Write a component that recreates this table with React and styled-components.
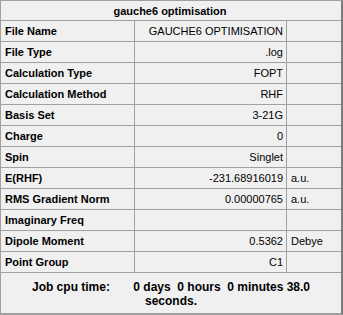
import React from "react";
import styled, { createGlobalStyle } from "styled-components";

const Global = createGlobalStyle`
  html, body { margin: 0; padding: 0; background: #f0f0f0; }
  body { font-family: "Liberation Sans", Arial, sans-serif; }
`;

const Panel = styled.div`
  box-sizing: border-box;
  width: 343px;
  height: 315px;
  background: #f0f0f0;
  border-top: 1px solid #a0a0a0;
  border-left: 1px solid #a0a0a0;
  border-right: 2px solid #7c7c7c;
  border-bottom: 2px solid #a0a0a0;
  display: flex;
  flex-direction: column;
  color: #000;
`;

const Grid = styled.div`
  display: grid;
  grid-template-columns: 134px 152px 1fr;
  grid-auto-rows: 21px;
  grid-template-rows: 20px;
`;

const Title = styled.div`
  grid-column: 1 / -1;
  border-bottom: 1px solid #a0a0a0;
  font-size: 11px;
  font-weight: bold;
  display: flex;
  align-items: center;
  justify-content: center;
  padding-right: 2px;
`;

const Cell = styled.div`
  box-sizing: border-box;
  border-bottom: 1px solid #a0a0a0;
  border-right: ${(p) => (p.$last ? "none" : "1px solid #a0a0a0")};
  font-size: 11px;
  font-weight: ${(p) => (p.$bold ? "bold" : "normal")};
  display: flex;
  align-items: center;
  justify-content: ${(p) => (p.$align === "right" ? "flex-end" : "flex-start")};
  padding: ${(p) => (p.$align === "right" ? "0 3px 0 0" : "0 0 0 4px")};
  white-space: nowrap;
  overflow: hidden;
`;

const Footer = styled.div`
  flex: 1;
  padding-top: 7px;
  font-size: 12px;
  font-weight: bold;
  line-height: 14px;
  text-align: center;
  white-space: pre;
`;

const rows = [
  ["File Name", "GAUCHE6 OPTIMISATION", ""],
  ["File Type", ".log", ""],
  ["Calculation Type", "FOPT", ""],
  ["Calculation Method", "RHF", ""],
  ["Basis Set", "3-21G", ""],
  ["Charge", "0", ""],
  ["Spin", "Singlet", ""],
  ["E(RHF)", "-231.68916019", "a.u."],
  ["RMS Gradient Norm", "0.00000765", "a.u."],
  ["Imaginary Freq", "", ""],
  ["Dipole Moment", "0.5362", "Debye"],
  ["Point Group", "C1", ""],
];

export default function App() {
  return (
    <>
      <Global />
      <Panel>
        <Grid>
          <Title>gauche6 optimisation</Title>
          {rows.map(([label, value, unit]) => (
            <React.Fragment key={label}>
              <Cell $bold>{label}</Cell>
              <Cell $align="right">{value}</Cell>
              <Cell $last>{unit}</Cell>
            </React.Fragment>
          ))}
        </Grid>
        <Footer>
          {"Job cpu time:       0 days  0 hours  0 minutes 38.0\nseconds."}
        </Footer>
      </Panel>
    </>
  );
}
